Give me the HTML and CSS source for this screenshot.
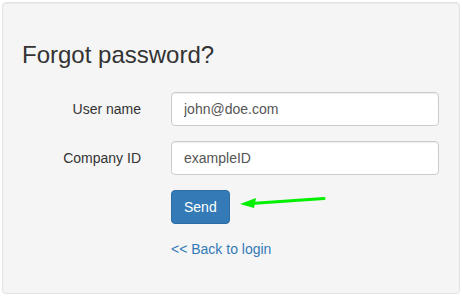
FILE: index.html
```html
<!DOCTYPE html>
<html>
<head>
<meta charset="utf-8">
<link rel="stylesheet" href="styles.css">
</head>
<body>
<div class="well">
  <h3 class="title">Forgot password?</h3>
  <form class="form">
    <div class="row">
      <label class="label">User name</label>
      <input class="input" type="text" value="john@doe.com">
    </div>
    <div class="row">
      <label class="label">Company ID</label>
      <input class="input" type="text" value="exampleID">
    </div>
    <div class="row">
      <span></span>
      <div class="btn-cell">
        <button class="btn" type="button">Send</button>
        <svg class="arrow" width="90" height="16" viewBox="0 0 90 16">
          <line x1="14" y1="8.5" x2="87" y2="3.5" stroke="#00f000" stroke-width="3" stroke-linecap="round"/>
          <polygon points="3,9 19,3 17,13" fill="#00f000"/>
        </svg>
      </div>
    </div>
    <div class="row">
      <span></span>
      <a class="link" href="#">&lt;&lt; Back to login</a>
    </div>
  </form>
</div>
</body>
</html>
```
FILE: styles.css
```css
* { box-sizing: border-box; }
html, body { margin: 0; padding: 0; }
body {
  padding: 2px;
  font-family: "Liberation Sans", Arial, sans-serif;
  font-size: 14px;
  line-height: 20px;
  color: #333;
  background: #fff;
}
.well {
  width: 458px;
  height: 292px;
  padding: 19px 19px 19px 19px;
  background: #f5f5f5;
  border: 1px solid #e3e3e3;
  border-radius: 4px;
  box-shadow: inset 0 1px 1px rgba(0,0,0,0.05);
}
.title {
  margin: 20px 0 0 0;
  font-size: 24px;
  font-weight: 500;
  line-height: 26px;
  color: #333;
}
.form {
  margin-top: 24px;
}
.row {
  display: grid;
  grid-template-columns: 119px 268px;
  column-gap: 30px;
  align-items: center;
  margin-bottom: 15px;
}
.label {
  text-align: right;
  font-weight: normal;
  color: #333;
}
.input {
  display: block;
  width: 268px;
  height: 34px;
  padding: 6px 12px;
  font-family: "Liberation Sans", Arial, sans-serif;
  font-size: 14px;
  line-height: 20px;
  color: #555;
  background: #fff;
  border: 1px solid #ccc;
  border-radius: 4px;
  box-shadow: inset 0 1px 1px rgba(0,0,0,0.075);
}
.btn-cell {
  position: relative;
  height: 34px;
}
.btn {
  display: block;
  height: 34px;
  padding: 6px 12px;
  font-family: "Liberation Sans", Arial, sans-serif;
  font-size: 14px;
  line-height: 20px;
  color: #fff;
  background: #337ab7;
  border: 1px solid #2e6da4;
  border-radius: 4px;
}
.arrow {
  position: absolute;
  left: 66px;
  top: 5px;
}
.link {
  color: #337ab7;
  text-decoration: none;
  line-height: 20px;
}
```
